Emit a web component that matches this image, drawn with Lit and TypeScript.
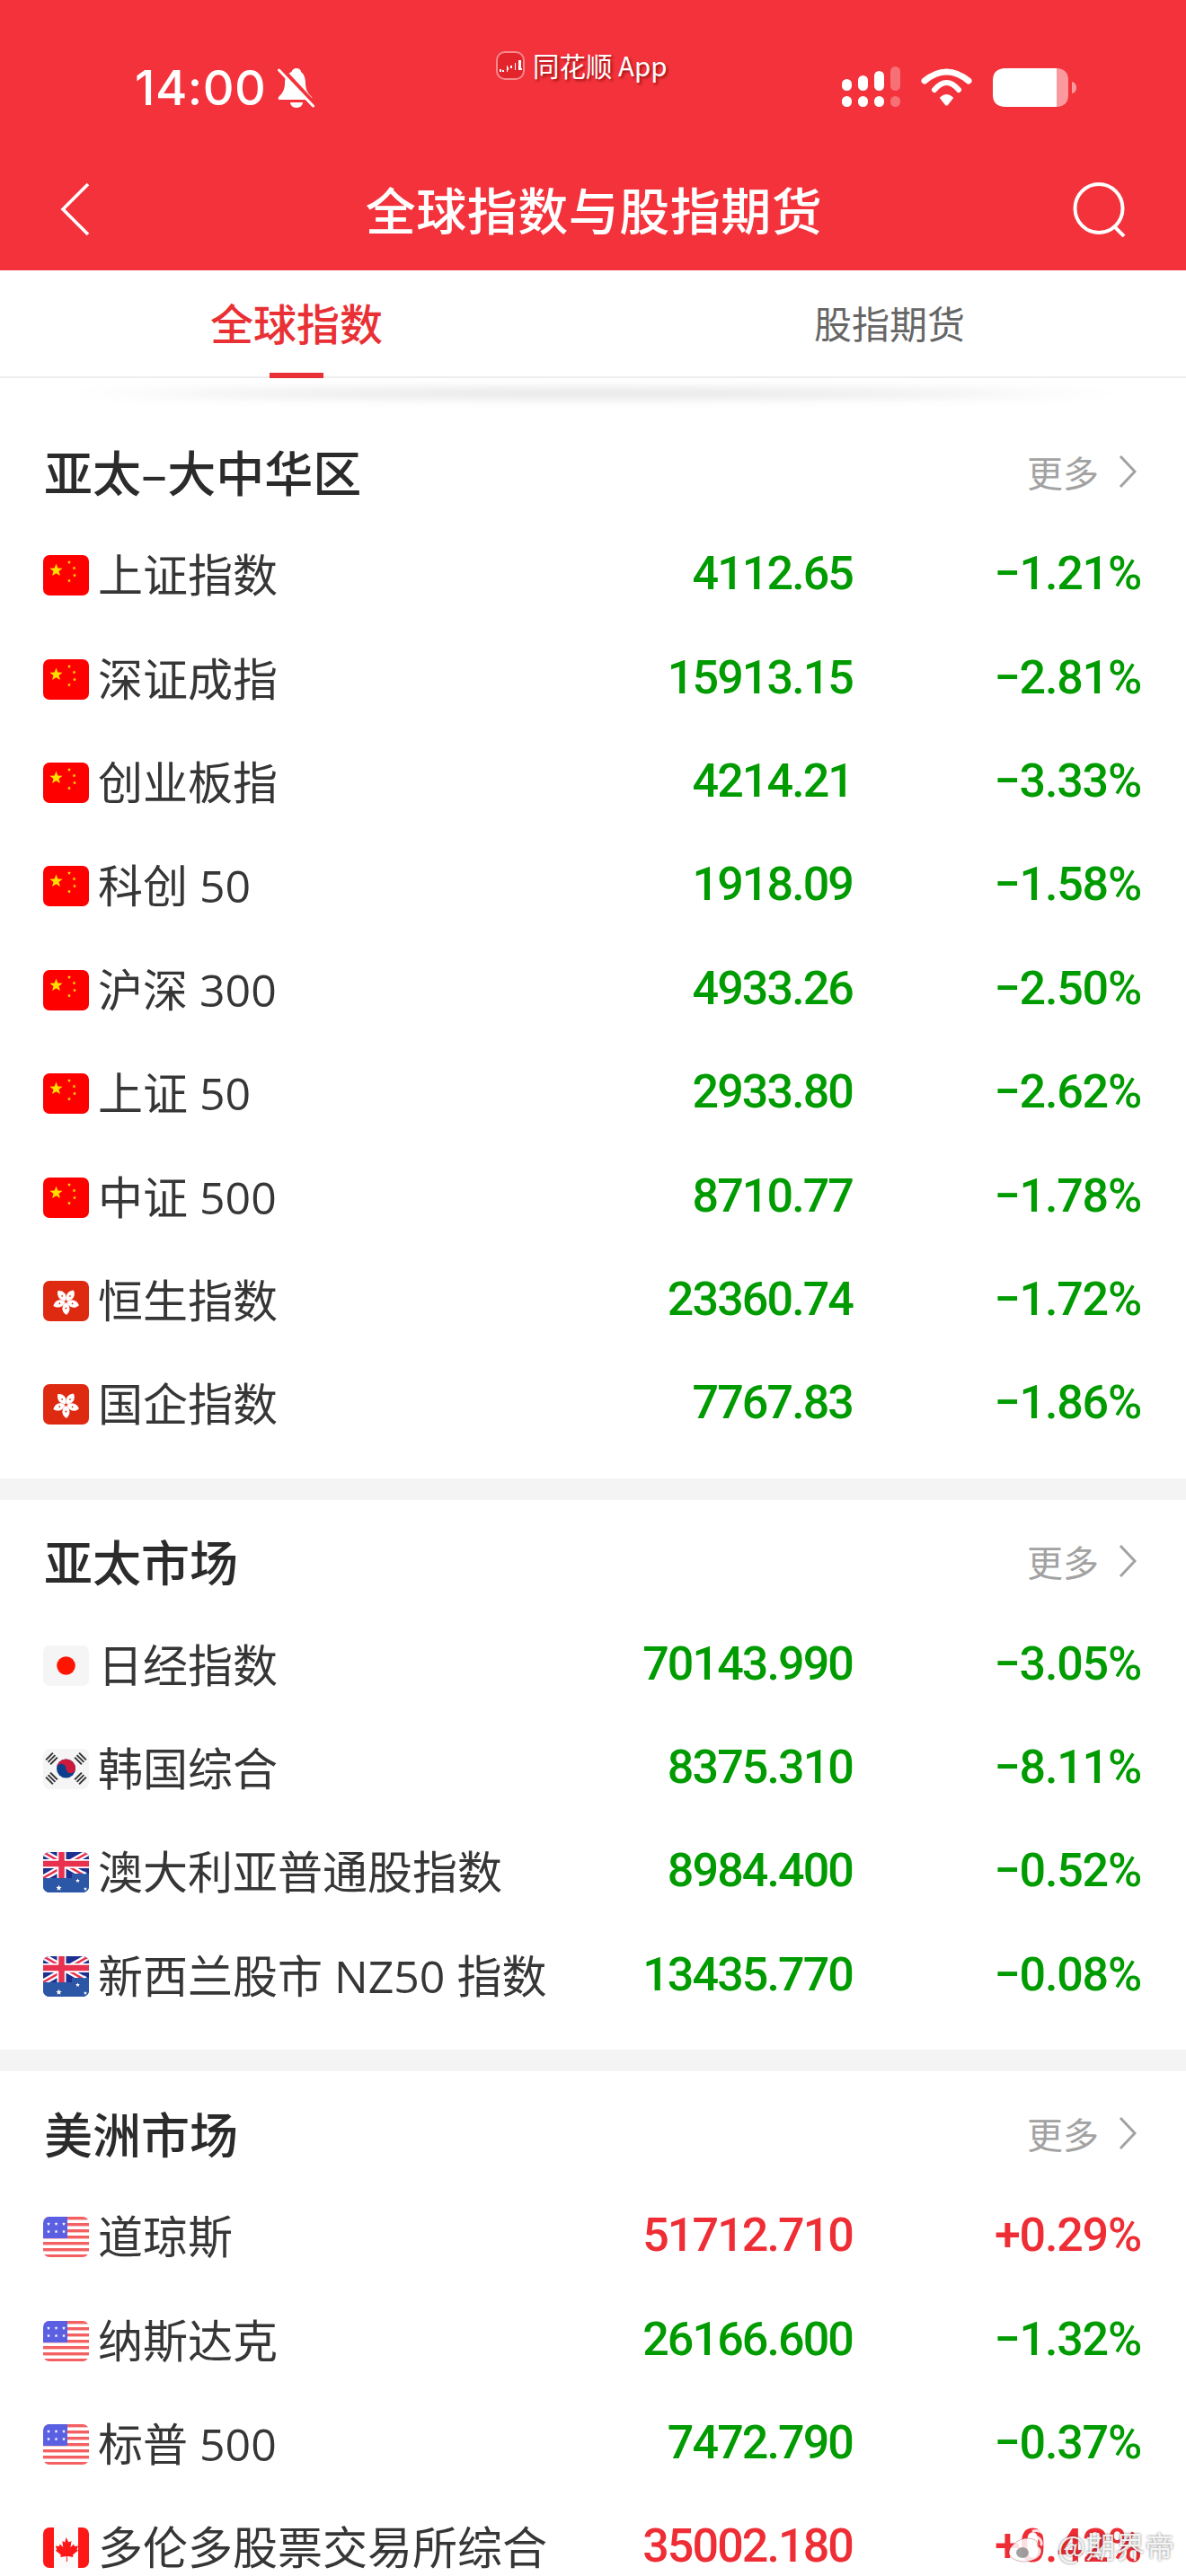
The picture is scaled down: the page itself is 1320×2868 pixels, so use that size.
import { LitElement, html, css, svg } from "lit";
import { customElement } from "lit/decorators.js";

type Flag = "cn" | "hk" | "jp" | "kr" | "au" | "us" | "ca";
interface Row { flag: Flag; name: string; price: string; pct: string }
interface Section { title: string; rows: Row[] }

const SECTIONS: Section[] = [
  {
    title: "亚太–大中华区",
    rows: [
      { flag: "cn", name: "上证指数", price: "4112.65", pct: "−1.21%" },
      { flag: "cn", name: "深证成指", price: "15913.15", pct: "−2.81%" },
      { flag: "cn", name: "创业板指", price: "4214.21", pct: "−3.33%" },
      { flag: "cn", name: "科创 50", price: "1918.09", pct: "−1.58%" },
      { flag: "cn", name: "沪深 300", price: "4933.26", pct: "−2.50%" },
      { flag: "cn", name: "上证 50", price: "2933.80", pct: "−2.62%" },
      { flag: "cn", name: "中证 500", price: "8710.77", pct: "−1.78%" },
      { flag: "hk", name: "恒生指数", price: "23360.74", pct: "−1.72%" },
      { flag: "hk", name: "国企指数", price: "7767.83", pct: "−1.86%" },
    ],
  },
  {
    title: "亚太市场",
    rows: [
      { flag: "jp", name: "日经指数", price: "70143.990", pct: "−3.05%" },
      { flag: "kr", name: "韩国综合", price: "8375.310", pct: "−8.11%" },
      { flag: "au", name: "澳大利亚普通股指数", price: "8984.400", pct: "−0.52%" },
      { flag: "au", name: "新西兰股市 NZ50 指数", price: "13435.770", pct: "−0.08%" },
    ],
  },
  {
    title: "美洲市场",
    rows: [
      { flag: "us", name: "道琼斯", price: "51712.710", pct: "+0.29%" },
      { flag: "us", name: "纳斯达克", price: "26166.600", pct: "−1.32%" },
      { flag: "us", name: "标普 500", price: "7472.790", pct: "−0.37%" },
      { flag: "ca", name: "多伦多股票交易所综合", price: "35002.180", pct: "+0.42%" },
    ],
  },
];

const star = (x: number, y: number, r: number, fill: string) => {
  const pts: string[] = [];
  for (let i = 0; i < 10; i++) {
    const a = -Math.PI / 2 + (i * Math.PI) / 5;
    const rr = i % 2 ? r * 0.42 : r;
    pts.push(`${(x + rr * Math.cos(a)).toFixed(2)},${(y + rr * Math.sin(a)).toFixed(2)}`);
  }
  return svg`<polygon points=${pts.join(" ")} fill=${fill} />`;
};

const flagArt: Record<Flag, () => unknown> = {
  cn: () => svg`<rect width="51" height="45" fill="#fe0000"/>
    ${star(14.5, 17, 7.5, "#ffdf00")}${star(29, 8, 2.2, "#ffdf00")}${star(34.5, 14.5, 2.2, "#ffdf00")}${star(35, 22.5, 2.2, "#ffdf00")}${star(29, 28.5, 2.2, "#ffdf00")}`,
  hk: () => svg`<rect width="51" height="45" fill="#df2a12"/>
    ${[36, 108, 180, 252, 324].map(
      (a) => svg`<g transform="rotate(${a} 25.5 23)"><path d="M26 22 C20.500 19 20 12.500 25 8 C31 11.500 31 18 26 22Z" fill="#fff"/><circle cx="25.600" cy="15.500" r=".9" fill="#df2a12"/></g>`
    )}`,
  jp: () => svg`<rect width="51" height="45" fill="#f5f5f5"/><circle cx="25.5" cy="22.5" r="10.3" fill="#fe1500"/>`,
  kr: () => svg`<rect width="51" height="45" fill="#f5f5f5"/>
    <circle cx="25.5" cy="22" r="10.5" fill="#0b3e8c"/>
    <path d="M15 22 a10.5 10.5 0 0 1 21 0 a5.25 5.25 0 0 1 -10.5 0 a5.25 5.25 0 0 0 -10.5 0Z" fill="#cd1a3c"/>
    ${[[9.5, 11, -45], [41.5, 11, 45], [9.5, 33, 45], [41.5, 33, -45]].map(
      ([x, y, r]) => svg`<g transform="rotate(${r} ${x} ${y})" fill="#333"><rect x=${x - 5.5} y=${y - 4.5} width="11" height="2"/><rect x=${x - 5.5} y=${y - 1} width="11" height="2"/><rect x=${x - 5.5} y=${y + 2.5} width="11" height="2"/></g>`
    )}`,
  au: () => svg`<rect width="51" height="45" fill="#2c56a6"/>
    <rect width="51" height="29" fill="#1d2f8f"/>
    <path d="M0 0 L51 29 M51 0 L0 29" stroke="#fff" stroke-width="7"/>
    <path d="M0 0 L51 29 M51 0 L0 29" stroke="#e8304f" stroke-width="2.4"/>
    <path d="M0 13 H51 M20.5 0 V29" stroke="#fff" stroke-width="10"/>
    <path d="M0 13 H51 M20.5 0 V29" stroke="#e8304f" stroke-width="6.5"/>
    <path d="M0 29 H32 V45 H0Z" fill="#2c56a6"/><path d="M32 24 H51 V45 H32Z" fill="#2c56a6"/>
    ${star(17.5, 40, 3.4, "#fff")}${star(38.5, 32, 2.6, "#fff")}${star(46, 23, 2.2, "#fff")}${star(47, 41, 2.2, "#fff")}`,
  us: () => svg`<rect width="51" height="45" fill="#fff"/>
    ${[0, 7, 14, 21, 28, 35, 42].map(
      (y) => svg`<rect y=${y} width="51" height="3.4" fill="#f46062"/>`
    )}
    <rect width="27" height="24" fill="#5b60e2"/>
    ${[6, 14.5, 23].flatMap((x) => [8, 16.5].map((y) => star(x, y, 2.1, "#fff")))}`,
  ca: () => svg`<rect width="51" height="45" fill="#fbfbfb"/>
    <rect width="12" height="45" fill="#fe1717"/><rect x="39" width="12" height="45" fill="#fe1717"/>
    <path d="M25.5 11 l3 5.5 l3 -1.5 l-1 7 l3.5 -3.5 l1 2.5 l4 -.5 l-1.5 4 l1.5 1 l-6 5 l.5 2.5 l-6 -1 l-.6 0 v6 h-1 v-6 l-6.6 1 l.5 -2.5 l-6 -5 l1.5 -1 l-1.5 -4 l4 .5 l1 -2.5 l3.5 3.5 l-1 -7 l3 1.5Z" fill="#fe1717"/>`,
};

@customElement("app-root")
export class AppRoot extends LitElement {
  static styles = css`
    :host {
      display: block;
      width: 1320px;
      height: 2868px;
      overflow: hidden;
      position: relative;
      background: #fff;
      font-family: "Noto Sans CJK SC", "Noto Sans", sans-serif;
    }
    svg { display: block; flex: none; }
    .top { background: #f3323b; height: 301px; color: #fff; }
    .status { height: 164px; display: flex; position: relative; box-sizing: border-box; }
    .time-group { width: 552px; box-sizing: border-box; padding: 71px 0 0 150px; display: flex; align-items: flex-start; gap: 13px; }
    .time { font: 500 54px/54px Inter, Roboto, sans-serif; letter-spacing: 0.5px; }
    .bell { margin-top: 5px; }
    .app { width: 385px; box-sizing: border-box; padding-top: 57px; display: flex; align-items: flex-start; gap: 9px; }
    .app span { font-size: 29.5px; line-height: 36px; margin-top: -3px; text-shadow: 2px 2px 3px rgba(110, 0, 0, 0.65); }
    .indicators { display: flex; align-items: flex-start; padding-top: 74px; gap: 23px; }
    .wifi { margin-top: 2px; }
    .battery { margin-top: 2px; }
    .nav { height: 137px; display: grid; grid-template-columns: 1fr auto 1fr; align-items: center; padding: 0 65px 0 67px; }
    .nav h1 { margin: -2px 0 0; font-size: 56px; font-weight: 500; line-height: 70px; letter-spacing: 0.5px; }
    .nav .search { justify-self: end; }

    .tabs { height: 120px; box-sizing: border-box; display: flex; border-bottom: 2px solid #eee; position: relative; }
    .tab { flex: 1; display: flex; justify-content: center; align-items: center; position: relative; font-size: 42px; color: #666; padding-bottom: 4px; }
    .tab.active { font-size: 48px; font-weight: 500; color: #e93035; }
    .tab.active::after { content: ""; position: absolute; left: 300px; width: 60px; height: 6px; bottom: -2px; background: #e93035; }
    .glow { height: 35px; position: relative; }
    .glow::after { content: ""; position: absolute; left: 60px; right: 60px; top: 10px; height: 14px; background: radial-gradient(closest-side, rgba(0,0,0,.15), rgba(0,0,0,.08) 70%, rgba(0,0,0,0)); filter: blur(6px); }

    .section { padding-bottom: 24px; }
    .section + .section { border-top: 24px solid #f4f4f4; }
    .head { height: 127px; box-sizing: border-box; padding: 10px 55px 0 49px; display: flex; justify-content: space-between; align-items: center; }
    .head h2 { margin: 0; font-size: 54px; font-weight: 500; color: #2b2b2b; line-height: 70px; }
    .more { display: flex; align-items: center; gap: 22px; font-size: 40px; color: #a2a2a2; margin-left: -1px; }
    .row { height: 115.4px; display: grid; grid-template-columns: 1fr auto 321px; align-items: center; padding: 0 50px 0 48px; }
    .name { display: flex; align-items: center; gap: 10px; font-family: "Open Sans", "Noto Sans CJK SC", sans-serif; font-size: 50px; line-height: 70px; color: #363636; white-space: nowrap; }
    .name span { margin-bottom: 1px; }
    .flag { width: 51px; height: 45px; border-radius: 7px; }
    .num { font-family: Roboto, sans-serif; font-weight: 500; font-size: 52px; text-align: right; white-space: nowrap; margin-bottom: 4px; }
    .price { letter-spacing: -1.9px; }
    .pct { letter-spacing: -1.2px; }
    .down { color: #009b00; }
    .up { color: #ee2d35; }

    .mark { position: absolute; left: 1122px; top: 2815px; display: flex; align-items: center; gap: 9px; color: rgba(255,255,255,.88); font-size: 33px; line-height: 38px; text-shadow: 0 0 3px rgba(0,0,0,.55); }
  `;

  private renderRow(r: Row) {
    const cls = r.pct.startsWith("+") ? "up" : "down";
    return html`<div class="row">
      <div class="name">
        <svg class="flag" viewBox="0 0 51 45" width="51" height="45">${flagArt[r.flag]()}</svg>
        <span>${r.name}</span>
      </div>
      <div class="num price ${cls}">${r.price}</div>
      <div class="num pct ${cls}">${r.pct}</div>
    </div>`;
  }

  private signal() {
    const xs = [0, 18, 36, 54];
    const tops = [14, 10, 5, 0];
    return html`<svg width="65" height="46" viewBox="0 0 65 46">
      ${xs.map((x, i) => svg`<g fill="#fff" opacity=${i === 3 ? 0.3 : 1}>
        <rect x=${x} y=${tops[i]} width="11" height=${27 - tops[i]} rx="5.5"/>
        <rect x=${x} y="33" width="11" height="12" rx="5.5"/>
      </g>`)}
    </svg>`;
  }

  render() {
    return html`
      <div class="top">
        <div class="status">
          <div class="time-group">
            <span class="time">14:00</span>
            <svg class="bell" width="41" height="44" viewBox="0 0 41 44">
              <path fill="#fff" d="M21 0c-3 0-5 2-5.500 4C10 6 8 11 8 16c0 7-2 11-6 15-2 2-2 4 1 4h33c3 0 3-2 1-4-4-4-6-8-6-15 0-5-2-10-5-12C26 2 24 0 21 0z"/>
              <path fill="#fff" d="M14 38h14c0 3-3 6-7 6s-7-3-7-6z"/>
              <path d="M3 -1 L42 41" stroke="#f3323b" stroke-width="5"/>
              <path d="M1.500 2 L39.500 42" stroke="#fff" stroke-width="3" stroke-linecap="round"/>
            </svg>
          </div>
          <div class="app">
            <svg width="32" height="32" viewBox="0 0 32 32">
              <rect x="1" y="1" width="30" height="30" rx="9" fill="#e3242b" stroke="#f58a8f" stroke-width="2"/>
              <path fill="#fff" d="M4 20h2v3H4zM7 21h2v2H7zM12 16h1v2h1v3h-1v2h-1zM16 16h2v3h-2zM21 13h1v8h-1zM25 10h3v9h1v2h-4z"/>
            </svg>
            <span>同花顺 App</span>
          </div>
          <div class="indicators">
            ${this.signal()}
            <svg class="wifi" width="57" height="42" viewBox="0 0 57 42" fill="none" stroke="#fff">
              <path d="M4 14Q28.500 -6 53 14" stroke-width="7" stroke-linecap="round"/>
              <path d="M15 24Q28.500 8 42 24" stroke-width="6" stroke-linecap="round"/>
              <path d="M22 33Q28.500 27 35 33L29.500 40Q28.500 41 27.500 40Z" fill="#fff" stroke-width="2" stroke-linejoin="round"/>
            </svg>
            <svg class="battery" width="94" height="43" viewBox="0 0 94 43">
              <path fill="#fa9a9e" d="M71 0H70V43H71C79 43 84 38 84 30V13C84 5 79 0 71 0Z"/>
              <path fill="#fff" d="M14 0H71V43H14C5 43 0 38 0 30V13C0 5 5 0 14 0Z"/>
              <path fill="#fa9a9e" d="M88 15c3 .5 5 3 5 6.500s-2 6-5 6.500z"/>
            </svg>
          </div>
        </div>
        <div class="nav">
          <svg width="33" height="60" viewBox="0 0 33 60" fill="none" stroke="#fff" stroke-width="3.600">
            <path d="M31 2L3 30L31 58" />
          </svg>
          <h1>全球指数与股指期货</h1>
          <svg class="search" width="62" height="62" viewBox="0 0 62 62" fill="none" stroke="#fff" stroke-width="4">
            <ellipse cx="30" cy="30" rx="26.500" ry="27"/>
            <path d="M47 50L58 61"/>
          </svg>
        </div>
      </div>
      <div class="tabs">
        <div class="tab active">全球指数</div>
        <div class="tab">股指期货</div>
      </div>
      <div class="glow"></div>
      ${SECTIONS.map(
        (s) => html`<section class="section">
          <div class="head">
            <h2>${s.title}</h2>
            <div class="more">
              <span>更多</span>
              <svg width="20" height="38" viewBox="0 0 20 38" fill="none" stroke="#a2a2a2" stroke-width="3"><path d="M2 2L18 19L2 36"/></svg>
            </div>
          </div>
          ${s.rows.map((r) => this.renderRow(r))}
        </section>`
      )}
      <div class="mark">
        <svg width="46" height="38" viewBox="0 0 46 38" fill="none">
          <path d="M19 11C9 13 1 21 1 27c0 6 9 10 17 10 10 0 19-5 19-12 0-4-5-5-5-6 2-5-2-8-13-8z" fill="rgba(255,255,255,.85)" stroke="rgba(120,0,0,.3)"/>
          <ellipse cx="16" cy="27" rx="7" ry="6" fill="rgba(130,130,130,.75)"/>
          <path d="M28 3C37 1 45 8 43 18M29 10c5-1 9 3 8 8" stroke="rgba(255,255,255,.85)" stroke-width="3" stroke-linecap="round"/>
        </svg>
        <span>@期界帝</span>
      </div>
    `;
  }
}
